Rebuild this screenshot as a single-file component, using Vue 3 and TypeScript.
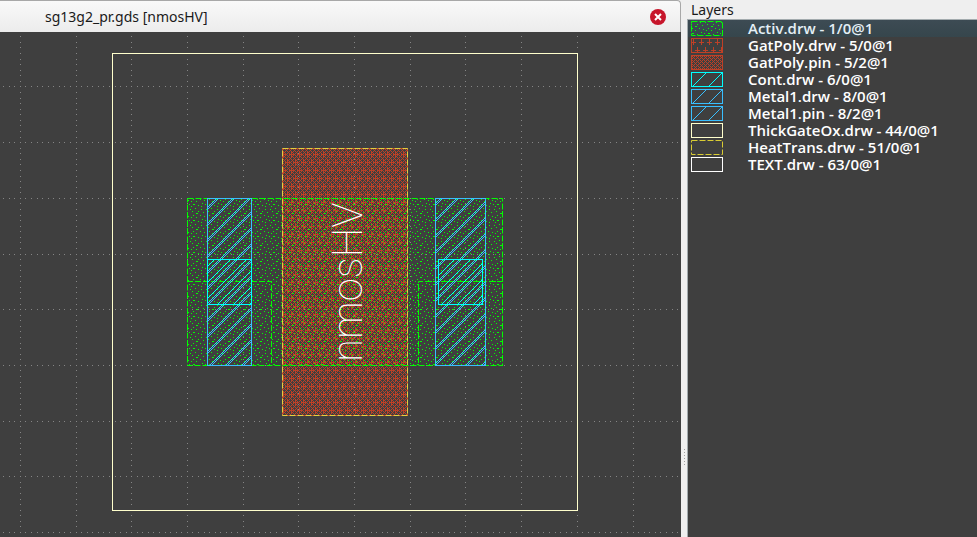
<script setup lang="ts">
import { ref } from 'vue'

type Cell = [number, number]
type Fill = 'speckle' | 'plus' | 'mesh' | 'slash' | 'none'

interface Layer {
  name: string
  color: string
  fill: Fill
  dashed?: boolean
}

const layers: Layer[] = [
  { name: 'Activ.drw - 1/0@1', color: '#00ff00', fill: 'speckle', dashed: true },
  { name: 'GatPoly.drw - 5/0@1', color: '#bf4026', fill: 'plus' },
  { name: 'GatPoly.pin - 5/2@1', color: '#bf4026', fill: 'mesh' },
  { name: 'Cont.drw - 6/0@1', color: '#00ffff', fill: 'slash' },
  { name: 'Metal1.drw - 8/0@1', color: '#39bfff', fill: 'slash' },
  { name: 'Metal1.pin - 8/2@1', color: '#39bfff', fill: 'slash' },
  { name: 'ThickGateOx.drw - 44/0@1', color: '#ffffcc', fill: 'none' },
  { name: 'HeatTrans.drw - 51/0@1', color: '#d9cc33', fill: 'none', dashed: true },
  { name: 'TEXT.drw - 63/0@1', color: '#ffffff', fill: 'none' },
]

const selected = ref(0)

const toPath = (cells: Cell[]): string => cells.map(([x, y]) => `M${x} ${y}h1v1h-1z`).join('')

// Set pixels of the 16 x 16 speckle tile
const speckle: Cell[] = [
  [3, 0], [9, 1], [14, 1], [0, 3], [6, 3], [11, 4], [4, 5], [5, 5],
  [1, 7], [8, 7], [12, 8], [4, 9], [15, 9], [10, 11],
  [1, 12], [2, 12], [13, 12], [6, 13], [9, 14], [15, 14],
]

const isPlus = (x: number, y: number): boolean => {
  const px = y % 16 < 8 ? x % 8 : (x + 4) % 8
  const py = y % 8
  return (px === 2 && py >= 1 && py <= 6) || (py === 4 && px <= 4)
}

const isSet = (fill: Fill, x: number, y: number): boolean => {
  switch (fill) {
    case 'speckle':
      return speckle.some(([sx, sy]) => sx === x % 16 && sy === y % 16)
    case 'plus':
      return isPlus(x, y)
    case 'mesh':
      return (x + y) % 4 === 0 || (x - y) % 4 === 0
    case 'slash':
      return (x + y) % 16 === 15
    default:
      return false
  }
}

const fillPath = (fill: Fill, width: number, height: number): string => {
  const cells: Cell[] = []
  for (let y = 0; y < height; y++) {
    for (let x = 0; x < width; x++) {
      if (isSet(fill, x, y)) cells.push([x, y])
    }
  }
  return toPath(cells)
}

const diagonal = (sum: number): Cell[] =>
  Array.from({ length: 16 }, (_, x): Cell => [x, (sum - x + 16) % 16])

const specklePath = toPath(speckle)
const plusPath = fillPath('plus', 16, 16)
const meshPath = fillPath('mesh', 16, 16)
const metalPath = toPath([...diagonal(14), ...diagonal(0)])
const contPath = toPath(diagonal(9))

// Dotted grid: ten dots to each major division
const gridPath = ((): string => {
  const major = 55.7
  const minor = major / 10
  const cells: Cell[] = []
  for (let i = 0; i < 36; i++) {
    for (let j = 0; j < 240; j++) {
      cells.push([Math.floor(20.3 + i * major), Math.floor(j * minor - 0.8)])
      cells.push([Math.floor(3.6 + j * minor), Math.floor(i * major - 0.8)])
    }
  }
  return toPath(cells)
})()
</script>

<template>
  <div class="viewer">
    <main class="document">
      <header class="tab">
        <span class="tab-title">sg13g2_pr.gds [nmosHV]</span>
        <button class="close" type="button" aria-label="Close">
          <svg width="16" height="16" viewBox="0 0 16 16" aria-hidden="true">
            <circle cx="8" cy="8" r="8" fill="#c7162b" />
            <path d="M5 5l6 6M11 5l-6 6" stroke="#fff" stroke-width="2" />
          </svg>
        </button>
      </header>

      <svg class="canvas" role="img" aria-label="nmosHV">
        <defs>
          <pattern id="speckle" width="16" height="16" patternUnits="userSpaceOnUse">
            <path :d="specklePath" fill="#00ff00" />
          </pattern>
          <pattern
            id="plus"
            width="16"
            height="16"
            patternUnits="userSpaceOnUse"
            patternTransform="translate(5 -2)"
          >
            <path :d="plusPath" fill="#bf4026" />
          </pattern>
          <pattern id="mesh" width="16" height="16" patternUnits="userSpaceOnUse">
            <path :d="meshPath" fill="#bf4026" />
          </pattern>
          <pattern id="metal" width="16" height="16" patternUnits="userSpaceOnUse">
            <path :d="metalPath" fill="#39bfff" />
          </pattern>
          <pattern id="cont" width="16" height="16" patternUnits="userSpaceOnUse">
            <path :d="contPath" fill="#00ffff" />
          </pattern>
        </defs>

        <path :d="gridPath" fill="#858585" />

        <g transform="translate(0 -32)">
          <rect x="282" y="148" width="126" height="268" fill="url(#mesh)" />
          <rect x="282" y="148" width="126" height="268" fill="url(#plus)" />
          <rect x="187" y="198" width="316" height="168" fill="url(#speckle)" />
        </g>

        <g transform="translate(0 -32)" fill="none">
          <rect x="282.5" y="148.5" width="125" height="267" stroke="#bf4026" />
          <rect x="282.5" y="148.5" width="125" height="267" stroke="#e0d040" stroke-dasharray="6 2" />
          <g stroke="#00ff00" stroke-dasharray="6 2">
            <rect x="187.5" y="198.5" width="315" height="167" />
            <path d="M187 281.5H271.5V365M503 281.5H418.5V365" />
          </g>
          <g fill="url(#metal)">
            <rect x="207" y="198" width="45" height="168" />
            <rect x="435" y="198" width="51" height="168" />
          </g>
          <g stroke="#39bfff">
            <rect x="207.5" y="198.5" width="44" height="167" />
            <rect x="435.5" y="198.5" width="50" height="167" />
          </g>
          <g fill="url(#cont)">
            <rect x="207" y="259" width="45" height="46" />
            <rect x="438" y="259" width="45" height="46" />
          </g>
          <g stroke="#00ffff">
            <rect x="207.5" y="259.5" width="44" height="45" />
            <rect x="438.5" y="259.5" width="44" height="45" />
          </g>
          <rect x="112.5" y="53.5" width="465" height="457" stroke="#ffffcc" />
        </g>

        <text class="cell-label" transform="translate(362 330) rotate(-90)">nmosHV</text>
      </svg>
    </main>

    <div class="splitter" role="separator" aria-orientation="vertical">
      <i v-for="n in 6" :key="n" class="grip"></i>
    </div>

    <aside class="layers">
      <h2 class="layers-title">Layers</h2>
      <ul class="layer-list">
        <li v-for="(layer, index) in layers" :key="layer.name">
          <button
            type="button"
            class="layer"
            :class="{ selected: index === selected }"
            :aria-pressed="index === selected"
            @click="selected = index"
          >
            <svg class="swatch" width="32" height="15" aria-hidden="true">
              <path :d="fillPath(layer.fill, 32, 15)" :fill="layer.color" />
              <rect
                x="0.5"
                y="0.5"
                width="31"
                height="14"
                fill="none"
                :stroke="layer.color"
                :stroke-dasharray="layer.dashed ? '6 2' : undefined"
              />
            </svg>
            <span>{{ layer.name }}</span>
          </button>
        </li>
      </ul>
    </aside>
  </div>
</template>

<style>
body {
  margin: 0;
  background: #efefef;
}
</style>

<style scoped>
.viewer {
  display: grid;
  grid-template-columns: minmax(0, 681fr) 6px minmax(0, 290fr);
  min-height: 100vh;
  background: #efefef;
  color: #1a1a1a;
  font-family: "Noto Sans", "Open Sans", sans-serif;
}

.document {
  display: flex;
  flex-direction: column;
}

.tab {
  display: flex;
  align-items: center;
  justify-content: space-between;
  box-sizing: border-box;
  height: 32px;
  padding: 0 14px 0 45px;
  border-top: 1px solid #a8a8a8;
  border-right: 1px solid #a8a8a8;
  border-top-right-radius: 4px;
  background: linear-gradient(#f9f9f9, #ececec);
}

.tab-title {
  font-size: 14px;
  line-height: 20px;
}

.close {
  display: flex;
  padding: 0;
  border: 0;
  background: none;
  cursor: pointer;
}

.canvas {
  flex: 1;
  display: block;
  width: 100%;
  height: 0;
  background: #3f3f3f;
}

.cell-label {
  fill: #fff;
  font-family: Roboto, Inter, sans-serif;
  font-size: 42px;
  font-weight: 100;
}

.splitter {
  display: flex;
  flex-direction: column;
  align-items: center;
  justify-content: flex-end;
  gap: 2px;
  box-sizing: border-box;
  padding-bottom: 72px;
}

.grip {
  width: 1px;
  height: 1px;
  background: #a0a0a0;
}

.layers {
  display: flex;
  flex-direction: column;
}

.layers-title {
  margin: 0;
  padding-left: 4px;
  font-size: 14px;
  font-weight: 400;
  line-height: 19px;
}

.layer-list {
  flex: 1;
  margin: 0;
  padding: 0;
  border-top: 1px solid #a3abae;
  border-left: 1px solid #a3abae;
  background: #3f3f3f;
  list-style: none;
}

.layer {
  display: flex;
  align-items: center;
  gap: 25px;
  width: 100%;
  height: 17px;
  padding: 0 3px;
  border: 0;
  background: none;
  color: #fff;
  font-family: "Open Sans", "Noto Sans", sans-serif;
  font-size: 15px;
  font-weight: 600;
  line-height: 17px;
  white-space: nowrap;
  text-align: left;
}

.layer.selected {
  background: linear-gradient(#3d4b54, #36464c);
  color: #e4eff5;
}

.swatch {
  flex: none;
}
</style>
